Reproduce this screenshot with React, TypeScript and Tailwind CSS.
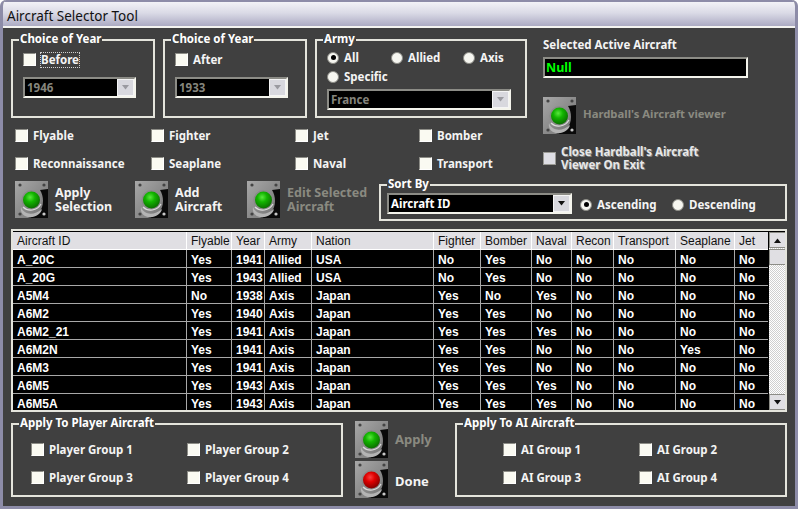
import React from "react";

type Row = string[];

const columns = [
  { name: "Aircraft ID", width: 174 },
  { name: "Flyable", width: 45 },
  { name: "Year", width: 33 },
  { name: "Army", width: 47 },
  { name: "Nation", width: 122 },
  { name: "Fighter", width: 47 },
  { name: "Bomber", width: 51 },
  { name: "Naval", width: 40 },
  { name: "Recon", width: 42 },
  { name: "Transport", width: 62 },
  { name: "Seaplane", width: 59 },
  { name: "Jet", width: 33 },
];

const rows: Row[] = [
  ["A_20C", "Yes", "1941", "Allied", "USA", "No", "Yes", "No", "No", "No", "No", "No"],
  ["A_20G", "Yes", "1943", "Allied", "USA", "No", "Yes", "No", "No", "No", "No", "No"],
  ["A5M4", "No", "1938", "Axis", "Japan", "Yes", "No", "Yes", "No", "No", "No", "No"],
  ["A6M2", "Yes", "1940", "Axis", "Japan", "Yes", "Yes", "No", "No", "No", "No", "No"],
  ["A6M2_21", "Yes", "1941", "Axis", "Japan", "Yes", "Yes", "Yes", "No", "No", "No", "No"],
  ["A6M2N", "Yes", "1941", "Axis", "Japan", "Yes", "Yes", "No", "No", "No", "Yes", "No"],
  ["A6M3", "Yes", "1941", "Axis", "Japan", "Yes", "Yes", "No", "No", "No", "No", "No"],
  ["A6M5", "Yes", "1943", "Axis", "Japan", "Yes", "Yes", "Yes", "No", "No", "No", "No"],
  ["A6M5A", "Yes", "1943", "Axis", "Japan", "Yes", "Yes", "Yes", "No", "No", "No", "No"],
];

// Titled frame, the title sits on top of the border
function Group({ title, className, children }: { title: string; className: string; children: React.ReactNode }) {
  return (
    <div className={`relative border-2 border-[#e4e4dc] ${className}`}>
      <span className="absolute left-[6px] top-[-9px] bg-[#404040] px-[1px] text-[11.5px] leading-[14px] font-bold text-white">
        {title}
      </span>
      {children}
    </div>
  );
}

function Box({ className = "" }: { className?: string }) {
  return (
    <span
      className={`block h-[13px] w-[13px] shrink-0 border border-t-[#8c8c86] border-l-[#8c8c86] border-r-white border-b-white bg-[#fafaf2] ${className}`}
    />
  );
}

function Check({ label, className = "" }: { label: string; className?: string }) {
  return (
    <div className={`flex h-[13px] items-center gap-[5px] ${className}`}>
      <Box />
      <span className="text-[11.5px] font-bold whitespace-nowrap text-[#f4f4f4]">{label}</span>
    </div>
  );
}

function Radio({ label, on = false, className = "" }: { label: string; on?: boolean; className?: string }) {
  return (
    <div className={`flex h-[13px] items-center gap-[5px] ${className}`}>
      <span className="flex h-[12px] w-[12px] shrink-0 items-center justify-center rounded-full border border-[#8c8c86] bg-[#f6f6f0]">
        {on && <span className="h-[5px] w-[5px] rounded-full bg-black" />}
      </span>
      <span className="text-[11.5px] font-bold whitespace-nowrap text-[#f4f4f4]">{label}</span>
    </div>
  );
}

function Combo({ value, className, disabled = true }: { value: string; className: string; disabled?: boolean }) {
  return (
    <div className={`flex h-[21px] items-stretch border-2 border-t-[#8c8c86] border-l-[#8c8c86] border-r-[#f4f4ec] border-b-[#f4f4ec] bg-black ${className}`}>
      <span className={`flex-1 pl-[2px] text-[11.5px] leading-[17px] font-bold ${disabled ? "text-[#85857d]" : "text-white"}`}>
        {value}
      </span>
      <span className="flex w-[17px] items-center justify-center border border-[#f4f4f4] bg-[#d8d8de]">
        <svg width="9" height="5" viewBox="0 0 9 5">
          <path d="M1 0h7L4.5 4.5z" fill={disabled ? "#9a9aa0" : "#111"} />
        </svg>
      </span>
    </div>
  );
}

function Led({ color = "green" }: { color?: "green" | "red" }) {
  const id = color === "green" ? "ledGreen" : "ledRed";
  const plate = `plate${id}`;
  return (
    <svg width="33" height="37" viewBox="0 0 33 37" className="shrink-0">
      <defs>
        <radialGradient id={id} cx="0.42" cy="0.34" r="0.7">
          <stop offset="0" stopColor={color === "green" ? "#58e83c" : "#f84040"} />
          <stop offset="0.4" stopColor={color === "green" ? "#12b400" : "#e00000"} />
          <stop offset="1" stopColor={color === "green" ? "#0a6800" : "#780000"} />
        </radialGradient>
        <linearGradient id={plate} x1="0" y1="0" x2="1" y2="1">
          <stop offset="0" stopColor="#a8a8a8" />
          <stop offset="1" stopColor="#707070" />
        </linearGradient>
      </defs>
      <rect width="33" height="37" fill={`url(#${plate})`} />
      <path d="M33 8 L33 37 L13 37 C22 35 28 30 28 20 C28 16 27 12 25 9 Z" fill="#0a0a0a" />
      <path d="M6 26 C9 34 19 35 27 28 C26 33 20 37 13 36 C8 35 5 31 6 26 Z" fill="#b4b4b4" />
      <circle cx="16.5" cy="19" r="10" fill="#8a8a8a" />
      <path d="M8 26 C13 31 22 30 26 23" fill="none" stroke="#dcdcdc" strokeWidth="1.2" />
      <circle cx="16.5" cy="19" r="8.5" fill={`url(#${id})`} />
      <circle cx="5" cy="4" r="1.6" fill="#444" />
      <circle cx="29" cy="4" r="1.6" fill="#444" />
      <circle cx="5" cy="33" r="1.6" fill="#444" />
      <circle cx="29" cy="33" r="1.6" fill="#c8c8c8" />
    </svg>
  );
}

function ScrollButton({ up }: { up: boolean }) {
  return (
    <div className="flex h-[16px] w-[17px] items-center justify-center border border-[#8c8c86] bg-[#e0dfe3]">
      <svg width="9" height="5" viewBox="0 0 9 5">
        <path d={up ? "M1 5h7L4.5 .5z" : "M1 0h7L4.5 4.5z"} fill="#111" />
      </svg>
    </div>
  );
}

export default function App() {
  return (
    <div className="flex h-[509px] w-[798px] flex-col overflow-hidden rounded-t-[6px] border-x-[3px] border-b-[3px] border-[#8d8ca8] bg-[#404040] font-['Noto_Sans',sans-serif]">
      {/* Title bar */}
      <div className="-mx-[3px] h-[28px] shrink-0 border-b-2 border-[#f4f4f0] bg-gradient-to-b from-[#f7f7fa] via-[#dadae6] to-[#acabc3] pl-[7px] text-[13.5px] leading-[33px] text-[#111] [box-shadow:inset_0_2px_0_#8d8ca8]">
        Aircraft Selector Tool
      </div>

      <div className="flex flex-1 flex-col px-[8px]">
        {/* Top block */}
        <div className="flex h-[142px] gap-[16px]">
          <div className="w-[516px] pt-[11px]">
            <div className="flex gap-[8px]">
              <Group title="Choice of Year" className="h-[79px] w-[144px] pt-[12px] pl-[10px]">
                <div className="flex h-[13px] items-center">
                  <Box className="mr-[4px]" />
                  <span className="border border-dotted border-[#d0d0d0] text-[11.5px] leading-[14px] font-bold text-[#f4f4f4]">Before</span>
                </div>
                <Combo value="1946" className="mt-[11px] w-[113px]" />
              </Group>
              <Group title="Choice of Year" className="h-[79px] w-[144px] pt-[12px] pl-[10px]">
                <Check label="After" />
                <Combo value="1933" className="mt-[11px] w-[113px]" />
              </Group>
              <Group title="Army" className="h-[79px] w-[212px] pt-[10px] pl-[10px]">
                <div className="flex">
                  <Radio label="All" on className="w-[64px]" />
                  <Radio label="Allied" className="w-[72px]" />
                  <Radio label="Axis" />
                </div>
                <Radio label="Specific" className="mt-[6px]" />
                <Combo value="France" className="mt-[6px] w-[184px]" />
              </Group>
            </div>

            <div className="mt-[11px] flex flex-col gap-[15px] pl-[4px]">
              <div className="flex">
                <Check label="Flyable" className="w-[136px]" />
                <Check label="Fighter" className="w-[144px]" />
                <Check label="Jet" className="w-[124px]" />
                <Check label="Bomber" />
              </div>
              <div className="flex">
                <Check label="Reconnaissance" className="w-[136px]" />
                <Check label="Seaplane" className="w-[144px]" />
                <Check label="Naval" className="w-[124px]" />
                <Check label="Transport" />
              </div>
            </div>
          </div>

          <div className="flex-1 pt-[9px]">
            <div className="text-[11.5px] leading-[16px] font-bold text-[#f4f4f4]">Selected Active Aircraft</div>
            <div className="mt-[4px] h-[21px] w-[205px] border-2 border-t-[#8c8c86] border-l-[#8c8c86] border-r-[#f4f4ec] border-b-[#f4f4ec] bg-black pl-[1px] text-[12.5px] leading-[17px] font-bold text-[#00ff00]">
              Null
            </div>
            <div className="mt-[19px] flex items-center gap-[7px]">
              <Led />
              <span className="pb-[2px] text-[11.3px] font-bold text-[#8a8a80]">Hardball's Aircraft viewer</span>
            </div>
            <div className="mt-[11px] flex items-center gap-[5px]">
              <span className="h-[13px] w-[13px] border border-[#9a9a94] bg-[#dedee4]" />
              <span className="text-[11.5px] leading-[13px] font-bold text-[#e8e8e8] [text-shadow:1px_1px_0_#808080]">
                Close Hardball's Aircraft
                <br />
                Viewer On Exit
              </span>
            </div>
          </div>
        </div>

        {/* Action buttons and sorting */}
        <div className="mt-[11px] flex h-[40px] pl-[4px]">
          <div className="flex w-[120px] items-start gap-[7px]">
            <Led />
            <span className="pt-[5px] text-[12.5px] leading-[14px] font-bold text-[#f4f4f4]">Apply<br />Selection</span>
          </div>
          <div className="flex w-[112px] items-start gap-[7px]">
            <Led />
            <span className="pt-[5px] text-[12.5px] leading-[14px] font-bold text-[#f4f4f4]">Add<br />Aircraft</span>
          </div>
          <div className="flex w-[132px] items-start gap-[7px]">
            <Led />
            <span className="pt-[5px] text-[12.5px] leading-[14px] font-bold text-[#8a8a80]">Edit Selected<br />Aircraft</span>
          </div>
          <Group title="Sort By" className="mt-[3px] flex h-[37px] w-[408px] items-center pt-[2px] pl-[6px]">
            <Combo value="Aircraft ID" disabled={false} className="w-[185px]" />
            <Radio label="Ascending" on className="mt-[2px] ml-[8px] w-[92px]" />
            <Radio label="Descending" className="mt-[2px]" />
          </Group>
        </div>

        {/* Aircraft list */}
        <div className="mt-[8px] flex h-[183px] w-[776px] overflow-hidden border-2 border-[#e4e4dc] bg-black pt-[1px]">
          <table className="w-[754px] table-fixed border-separate border-spacing-0 self-start text-[12px] leading-[15px] font-['Liberation_Sans',sans-serif]">
            <colgroup>
              {columns.map((c) => (
                <col key={c.name} style={{ width: c.width }} />
              ))}
            </colgroup>
            <thead>
              <tr className="bg-[#e0dfe3] text-[#111]">
                {columns.map((c) => (
                  <th key={c.name} className="h-[18px] border-r border-b border-white p-0 pt-[2px] pl-[4px] text-left font-normal whitespace-nowrap last:border-r-0">
                    {c.name}
                  </th>
                ))}
              </tr>
            </thead>
            <tbody>
              {rows.map((row) => (
                <tr key={row[0]} className="text-white">
                  {row.map((cell, i) => (
                    <td key={i} className="h-[18px] border-r border-b border-[#a8a8a8] p-0 pt-[3px] pl-[4px] align-top leading-[14px] font-bold last:border-r-0">
                      {cell}
                    </td>
                  ))}
                </tr>
              ))}
            </tbody>
          </table>
          <div className="ml-[1px] flex w-[17px] flex-col bg-[repeating-conic-gradient(#d0d0d0_0_25%,#ffffff_0_50%)] bg-[length:2px_2px]">
            <ScrollButton up />
            <div className="mt-[1px] h-[16px] border border-[#8c8c86] bg-[#e0dfe3]" />
            <div className="flex-1" />
            <ScrollButton up={false} />
          </div>
        </div>

        {/* Apply buttons */}
        <div className="mt-[11px] flex">
          <Group title="Apply To Player Aircraft" className="h-[74px] w-[332px] pt-[18px] pl-[18px]">
            <div className="flex flex-col gap-[15px]">
              <div className="flex">
                <Check label="Player Group 1" className="w-[156px]" />
                <Check label="Player Group 2" />
              </div>
              <div className="flex">
                <Check label="Player Group 3" className="w-[156px]" />
                <Check label="Player Group 4" />
              </div>
            </div>
          </Group>
          <div className="-mt-[2px] ml-[12px] flex w-[100px] flex-col gap-[3px]">
            <div className="flex items-center gap-[7px]">
              <Led />
              <span className="text-[13px] font-bold text-[#8a8a80]">Apply</span>
            </div>
            <div className="flex items-center gap-[7px]">
              <Led color="red" />
              <span className="pt-[5px] text-[13px] font-bold text-[#f4f4f4]">Done</span>
            </div>
          </div>
          <Group title="Apply To AI Aircraft" className="h-[74px] w-[332px] pt-[18px] pl-[46px]">
            <div className="flex flex-col gap-[15px]">
              <div className="flex">
                <Check label="AI Group 1" className="w-[136px]" />
                <Check label="AI Group 2" />
              </div>
              <div className="flex">
                <Check label="AI Group 3" className="w-[136px]" />
                <Check label="AI Group 4" />
              </div>
            </div>
          </Group>
        </div>
      </div>
    </div>
  );
}
